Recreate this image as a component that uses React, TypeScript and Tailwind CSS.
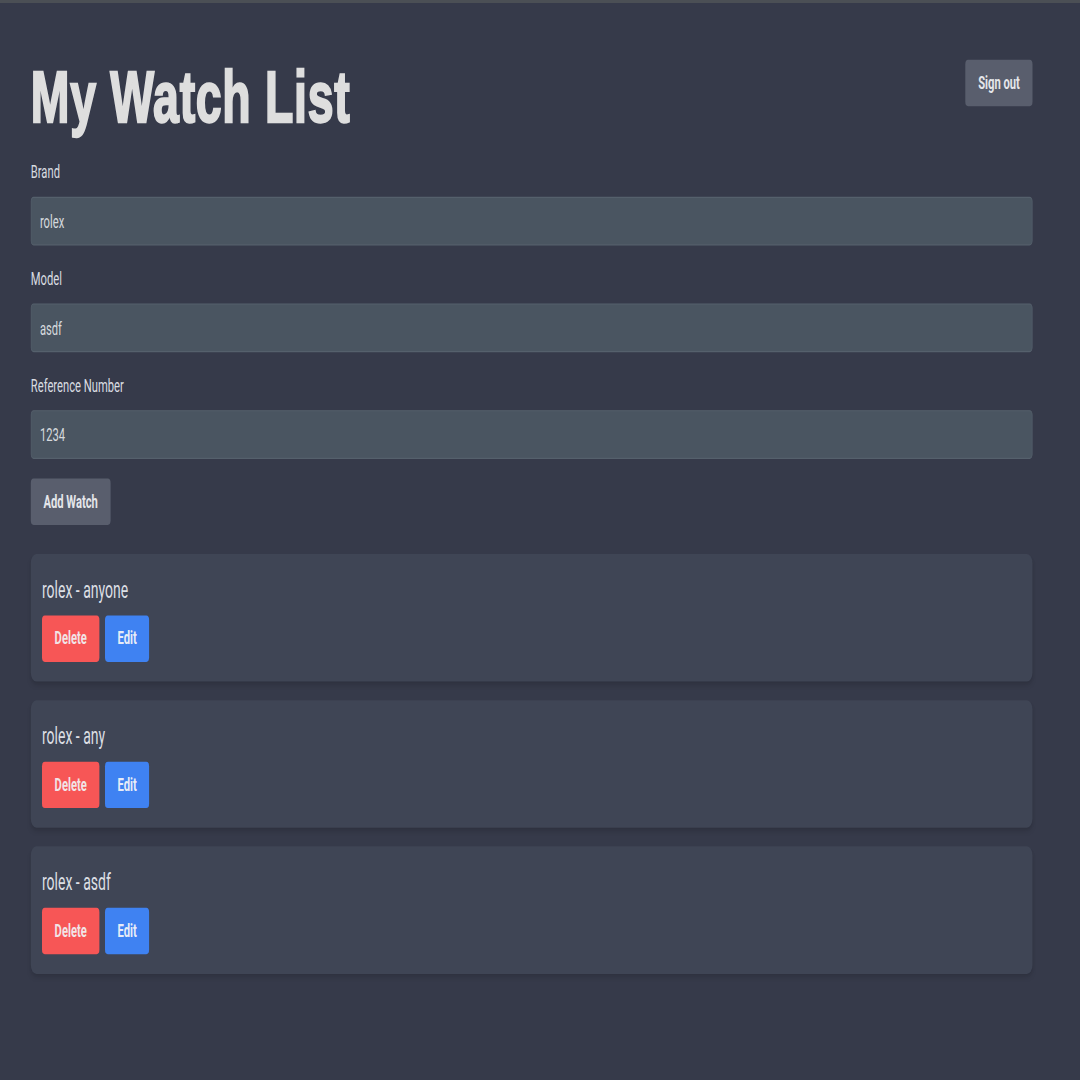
import React from 'react';

// The reference is a page rendered at ~1543x928 and squeezed into 1080x1080,
// so the page is laid out at its own size and scaled on both axes.

interface Watch {
  id: number;
  brand: string;
  model: string;
}

const watches: Watch[] = [
  { id: 1, brand: 'rolex', model: 'anyone' },
  { id: 2, brand: 'rolex', model: 'any' },
  { id: 3, brand: 'rolex', model: 'asdf' },
];

const fields = [
  { label: 'Brand', value: 'rolex' },
  { label: 'Model', value: 'asdf' },
  { label: 'Reference Number', value: '1234' },
];

const Field: React.FC<{ label: string; value: string }> = ({ label, value }) => (
  <div className="mb-[17px]">
    <label className="block mb-[9px] text-base leading-6">{label}</label>
    <input
      type="text"
      defaultValue={value}
      className="w-full h-[42px] px-3 rounded bg-[#4a5561] border border-[#55606c] text-base text-[#d6dade] outline-none"
    />
  </div>
);

const WatchCard: React.FC<{ watch: Watch }> = ({ watch }) => (
  <div className="mb-4 px-4 py-[17px] rounded-lg bg-[#3f4555] shadow-md">
    <div className="mb-2 text-xl leading-7 text-[#dcdfe4]">
      {watch.brand} - {watch.model}
    </div>
    <div className="flex gap-2">
      <button className="h-10 px-[18px] rounded bg-[#f75656] font-bold text-[#f1e4e6]">Delete</button>
      <button className="h-10 px-[18px] rounded bg-[#3f82f2] font-bold text-[#e6ecf7]">Edit</button>
    </div>
  </div>
);

export default function App() {
  return (
    <div className="w-[1080px] h-[1080px] overflow-hidden bg-[#363a4a] border-t-[3px] border-[#4b4f55]">
      <div className="w-[1543px] h-[928px] origin-top-left scale-x-[0.7] scale-y-[1.16] pl-[44px] pt-[49px] font-['Roboto',sans-serif] text-[#d9dce1]">
        <div className="w-[1431px]">
          <header className="flex justify-between items-start mb-[21px]">
            <h1 className="mt-[2px] origin-left scale-x-[1.07] font-['Liberation_Sans',Arial,sans-serif] text-[62px] leading-none font-bold tracking-[0.015em] [-webkit-text-stroke:2px_#dedede] text-[#dedede]">
              My Watch List
            </h1>
            <button className="h-10 px-[18px] rounded bg-[#595e6d] font-bold text-[#e4e6ea]">Sign out</button>
          </header>

          <form onSubmit={(e) => e.preventDefault()}>
            {fields.map((f) => (
              <Field key={f.label} label={f.label} value={f.value} />
            ))}
            <button type="submit" className="h-10 px-[18px] rounded bg-[#595e6d] font-bold text-[#e4e6ea]">
              Add Watch
            </button>
          </form>

          <div className="mt-[25px]">
            {watches.map((w) => (
              <WatchCard key={w.id} watch={w} />
            ))}
          </div>
        </div>
      </div>
    </div>
  );
}
